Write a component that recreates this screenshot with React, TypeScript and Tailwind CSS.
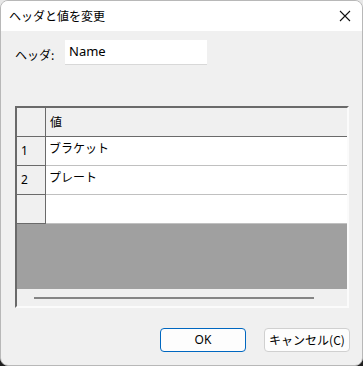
import React from "react";

const jp = { fontFamily: '"Noto Sans CJK JP", "Noto Sans", sans-serif' };

export default function App() {
  return (
    <div className="w-[363px] h-[366px] bg-[linear-gradient(to_bottom,#e8e8e8_0%,#e8e8e8_50%,#202020_50%,#202020_100%)]">
      <div
        className="w-[363px] h-[366px] rounded-[8px] overflow-hidden border border-[#b8b8b8] bg-[#f0f0f0] flex flex-col text-[12px] text-[#000]"
        style={jp}
      >
        {/* Title bar */}
        <div className="h-[30px] bg-white flex items-center justify-between pl-[8px] pr-[8px] shrink-0">
          <span className="text-[12px] leading-none">ヘッダと値を変更</span>
          <svg width="12" height="12" viewBox="0 0 12 12" className="mr-[3px]">
            <path d="M1 1 L11 11 M11 1 L1 11" stroke="#111" strokeWidth="1.1" />
          </svg>
        </div>

        {/* Body */}
        <div className="flex flex-col pl-[14px] pr-[14px]">
          <div className="flex items-center mt-[9px] h-[25px]">
            <span className="w-[50px] text-[12px] pt-[4px]">ヘッダ:</span>
            <div className="w-[142px] h-[25px] bg-white border-b border-[#d8d8d8] flex items-center pl-[4px] text-[13px]" style={{ fontFamily: '"Noto Sans", sans-serif' }}>
              Name
            </div>
          </div>

          {/* Grid */}
          <div className="mt-[41px] w-[334px] h-[202px] border-l-2 border-t-2 border-[#6a6a6a] border-r-2 border-r-[#fbfbfb] border-b-2 border-b-[#fbfbfb] flex flex-col">
            {/* header row */}
            <div className="flex h-[29px] border-b border-[#6a6a6a] bg-[#f0f0f0] shrink-0">
              <div className="w-[29px] border-r border-[#6a6a6a]"></div>
              <div className="flex-1 flex items-center pl-[4px] text-[12px]">値</div>
            </div>
            {[
              ["1", "ブラケット"],
              ["2", "プレート"],
              ["", ""],
            ].map(([n, v], i) => (
              <div key={i} className="flex h-[29px] shrink-0">
                <div className="w-[29px] border-r border-b border-[#6a6a6a] bg-[#f0f0f0] flex items-center pl-[4px] text-[12px]" style={{ fontFamily: '"Noto Sans", sans-serif' }}>
                  {n}
                </div>
                <div className="flex-1 bg-white border-b border-[#c0c0c0] flex items-start pt-[2px] pl-[3px] text-[12px]">{v}</div>
              </div>
            ))}
            <div className="flex-1 bg-[#a0a0a0]"></div>
            <div className="h-[17px] bg-[#f0f0f0] flex items-center pl-[17px] shrink-0">
              <div className="w-[280px] h-[2px] bg-[#858585]"></div>
            </div>
          </div>

          {/* Buttons */}
          <div className="flex justify-end gap-[18px] mt-[20px] mr-[-2px]">
            <div className="w-[86px] h-[24px] rounded-[4px] border border-[#0067c0] bg-[#fdfdfd] flex items-center justify-center text-[12px]" style={{ fontFamily: '"Noto Sans", sans-serif' }}>
              OK
            </div>
            <div className="w-[86px] h-[24px] rounded-[4px] border border-[#d0d0d0] bg-[#fdfdfd] flex items-center justify-center text-[12px]">
              キャンセル(C)
            </div>
          </div>
        </div>
      </div>
    </div>
  );
}
